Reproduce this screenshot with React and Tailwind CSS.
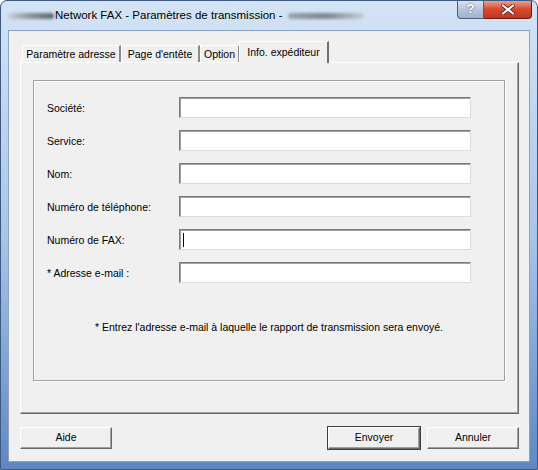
import React from 'react';

const font = { fontFamily: '"Liberation Sans", Arial, sans-serif' };

const fields = [
  { label: 'Société:', caret: false },
  { label: 'Service:', caret: false },
  { label: 'Nom:', caret: false },
  { label: 'Numéro de téléphone:', caret: false },
  { label: 'Numéro de FAX:', caret: true },
  { label: '* Adresse e-mail :', caret: false },
];

function Field({ label, caret }) {
  return (
    <>
      <div className="h-[21px] flex items-center pt-[2px] text-[10.5px] text-black">{label}</div>
      <div className="h-[21px] bg-white border border-t-[#7a7a7a] border-l-[#7a7a7a] border-r-[#dcdcdc] border-b-[#dcdcdc] shadow-[inset_1px_1px_0_#a0a0a0] flex items-center">
        {caret && <div className="ml-[3px] w-px h-[14px] bg-black" />}
      </div>
    </>
  );
}

function Tab({ children, width, active }) {
  if (active) {
    return (
      <div
        className={`${width} h-[22px] -ml-[1px] relative z-10 bg-[#f0f0f0] border-t border-l border-t-white border-l-white border-r-2 border-r-[#707070] flex items-start justify-center pt-[3px] text-[10.5px]`}
      >
        {children}
      </div>
    );
  }
  return (
    <div
      className={`${width} h-[17px] mt-[4px] border-t border-l border-t-white border-l-white border-r-2 border-r-[#8a8a8a] flex items-center justify-center pt-[1px] text-[10.5px]`}
    >
      {children}
    </div>
  );
}

function Button({ children, def }) {
  return (
    <button
      className={`w-[92px] h-[22px] bg-[#f0f0f0] text-[10.5px] text-black border border-t-white border-l-white border-r-[#696969] border-b-[#696969] shadow-[inset_-1px_-1px_0_#a0a0a0] ${def ? 'outline outline-1 outline-[#404040]' : ''}`}
    >
      {children}
    </button>
  );
}

export default function App() {
  return (
    <div
      style={font}
      className="w-[538px] h-[470px] flex flex-col rounded-t-[7px] border border-[#3c5a82] bg-gradient-to-b from-[#d4e4f6] via-[#a9c5e8] to-[#5f88c2] overflow-hidden"
    >
      {/* Title bar */}
      <div className="h-[29px] flex items-start shrink-0 relative">
        <div className="flex items-center h-[29px] pl-[7px]">
          <div className="w-[46px] h-[6px] bg-gradient-to-r from-[#c8d0da] via-[#8a919a] to-[#5f656d] blur-[1.5px] rounded-full" />
          <span className="text-[11.5px] text-black ml-[1px]">Network FAX - Paramètres de transmission -</span>
          <div className="ml-[5px] w-[76px] h-[6px] bg-gradient-to-r from-[#9aa2ac] via-[#7d848e] to-[#c6ced8] blur-[1.5px] rounded-full" />
        </div>
        <div className="absolute right-[5px] top-[-1px] flex">
          <div className="w-[27px] h-[19px] rounded-bl-[4px] border border-[#4a5f7c] border-t-0 bg-gradient-to-b from-[#dce6f1] via-[#b7c7da] to-[#9fb3cc] flex items-center justify-center text-white font-bold text-[13px] [text-shadow:0_0_2px_#3b4d66]">
            ?
          </div>
          <div className="w-[48px] h-[19px] rounded-br-[4px] border border-l-0 border-[#6b1f14] border-t-0 bg-gradient-to-b from-[#e9a99a] via-[#d24a30] to-[#c2371f] flex items-center justify-center">
            <svg width="14" height="11" viewBox="0 0 14 11">
              <path d="M2 1.5 L12 9.5 M12 1.5 L2 9.5" stroke="#5a1a10" strokeWidth="3.6" strokeLinecap="round" />
              <path d="M2 1.5 L12 9.5 M12 1.5 L2 9.5" stroke="#ffffff" strokeWidth="2.2" strokeLinecap="round" />
            </svg>
          </div>
        </div>
      </div>

      {/* Client area */}
      <div className="mx-[7px] mb-[7px] flex-1 bg-[#f0f0f0] border border-[#8aa3c4] flex flex-col pt-[10px] pl-[11px] pr-[10px]">
        {/* Tabs */}
        <div className="flex items-start h-[21px] pl-[2px] text-black">
          <Tab width="w-[99px]">Paramètre adresse</Tab>
          <Tab width="w-[79px]">Page d'entête</Tab>
          <Tab width="w-[40px]">Option</Tab>
          <Tab width="w-[90px]" active>Info. expéditeur</Tab>
        </div>
        <div className="h-[352px] border border-t-white border-l-white border-r-[#696969] border-b-[#696969] shadow-[inset_-1px_-1px_0_#a0a0a0] pt-[17px] pl-[12px] pr-[13px] pb-[32px]">
          <div className="h-full border border-[#a0a0a0] shadow-[inset_1px_1px_0_#ffffff,1px_1px_0_#ffffff] pt-[16px] pl-[13px]">
            <div className="grid grid-cols-[132px_292px] gap-y-[12px]">
              {fields.map((f) => (
                <Field key={f.label} label={f.label} caret={f.caret} />
              ))}
            </div>
            <div className="mt-[37px] pr-[13px] text-center text-[10.5px] text-black">
              * Entrez l'adresse e-mail à laquelle le rapport de transmission sera envoyé.
            </div>
          </div>
        </div>

        {/* Buttons */}
        <div className="mt-[13px] flex gap-[7px]">
          <Button>Aide</Button>
          <div className="flex-1" />
          <Button def>Envoyer</Button>
          <Button>Annuler</Button>
        </div>
      </div>
    </div>
  );
}
